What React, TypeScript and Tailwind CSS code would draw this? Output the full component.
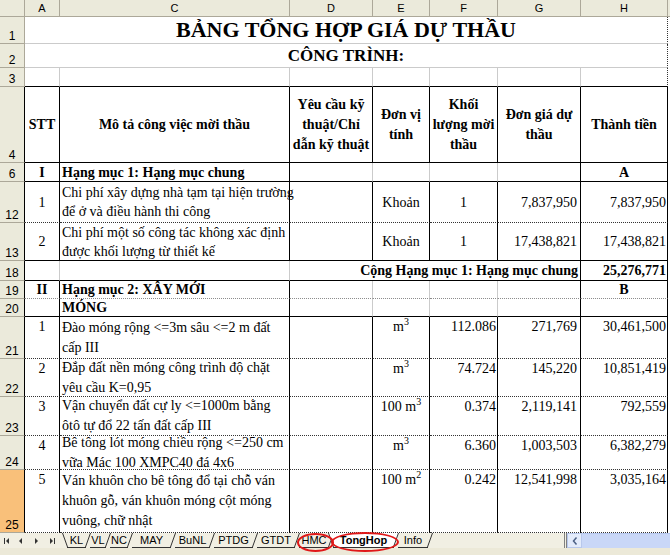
import React from "react";

// grid: row header | A | C | D | E | F | G | H | edge
const cols = "grid grid-cols-[25px_35px_230px_83px_57px_68px_83px_87px_2px] grid-rows-[minmax(0,1fr)]";

const R = {
    k: "[border-right:1px_solid_#000]",
    g: "[border-right:1px_solid_#cbcbcb]",
    p: "[border-right:1px_dotted_#333]",
    n: "",
};
const B = {
    k: "[border-bottom:1px_solid_#000]",
    g: "[border-bottom:1px_solid_#cbcbcb]",
    d: "[border-bottom:1px_dotted_#333]",
    dg: "[border-bottom:1px_dotted_#8c8c8c]",
};

type Cell = {
    t?: React.ReactNode;
    r: keyof typeof R;
    b: keyof typeof B;
    cls?: string;
};

type RowDef = {
    label: string;
    h: string;
    cells: Cell[];
    dark?: boolean;
    selected?: boolean;
};

const M3 = ({ pre, sup }: { pre?: string; sup: string }) => (
    <span>
        {pre}m<sup className="-top-[6px] text-[10px]">{sup}</sup>
    </span>
);

const lines = (arr: string[]) =>
    arr.map((l, i) => (
        <div key={i} className="whitespace-nowrap">
            {l}
        </div>
    ));

const center = "flex items-center justify-center";
const topC = "flex justify-center leading-[20px]";
const numT = "text-right leading-[20px] whitespace-nowrap";

const item = (
    no: string,
    desc: string[],
    unit: React.ReactNode,
    qty: string,
    price: string,
    total: string
): Cell[] => [
    { t: no, r: "k", b: "d", cls: topC },
    { t: lines(desc), r: "k", b: "d", cls: "flex flex-col justify-center pl-[2px] leading-[20px]" },
    { r: "k", b: "d" },
    { t: unit, r: "k", b: "d", cls: topC },
    { t: qty, r: "k", b: "d", cls: numT + " pr-[1px]" },
    { t: price, r: "k", b: "d", cls: numT + " pr-[3px]" },
    { t: total, r: "k", b: "d", cls: numT + " pr-[1px]" },
];

const rows: RowDef[] = [
    {
        label: "1",
        h: "h-[27px]",
        cells: [
            {
                t: "BẢNG TỔNG HỢP GIÁ DỰ THẦU",
                r: "p",
                b: "g",
                cls: "col-span-7 flex items-end justify-center pb-[1px] text-[22px] font-bold leading-[25px]",
            },
        ],
    },
    {
        label: "2",
        h: "h-[24px]",
        cells: [
            {
                t: "CÔNG TRÌNH:",
                r: "p",
                b: "g",
                cls: "col-span-7 flex items-center justify-center pt-[1px] text-[17px] font-bold",
            },
        ],
    },
    {
        label: "3",
        h: "h-[19px]",
        cells: [
            { r: "g", b: "k" },
            { r: "g", b: "k" },
            { r: "g", b: "k" },
            { r: "g", b: "k" },
            { r: "g", b: "k" },
            { r: "g", b: "k" },
            { r: "p", b: "k" },
        ],
    },
    {
        label: "4",
        h: "h-[76px]",
        dark: true,
        cells: [
            { t: "STT", r: "k", b: "k", cls: center + " font-bold" },
            { t: "Mô tả công việc mời thầu", r: "k", b: "k", cls: center + " font-bold" },
            {
                t: lines(["Yêu cầu kỹ", "thuật/Chỉ", "dẫn kỹ thuật"]),
                r: "k",
                b: "k",
                cls: "flex flex-col items-center justify-center font-bold leading-[20px]",
            },
            {
                t: lines(["Đơn vị", "tính"]),
                r: "k",
                b: "k",
                cls: "flex flex-col items-center justify-center font-bold leading-[20px]",
            },
            {
                t: lines(["Khối", "lượng mời", "thầu"]),
                r: "k",
                b: "k",
                cls: "flex flex-col items-center justify-center font-bold leading-[20px]",
            },
            {
                t: lines(["Đơn giá dự", "thầu"]),
                r: "k",
                b: "k",
                cls: "flex flex-col items-center justify-center font-bold leading-[20px]",
            },
            { t: "Thành tiền", r: "k", b: "k", cls: center + " font-bold" },
        ],
    },
    {
        label: "6",
        h: "h-[19px]",
        dark: true,
        cells: [
            { t: "I", r: "k", b: "k", cls: center + " font-bold" },
            { t: "Hạng mục 1: Hạng mục chung", r: "k", b: "k", cls: "flex items-center pl-[2px] font-bold" },
            { r: "g", b: "k" },
            { r: "g", b: "k" },
            { r: "g", b: "k" },
            { r: "k", b: "k" },
            { t: "A", r: "k", b: "k", cls: center + " font-bold" },
        ],
    },
    {
        label: "12",
        h: "h-[41px]",
        dark: true,
        cells: [
            { t: "1", r: "k", b: "d", cls: center },
            {
                t: lines(["Chi phí xây dựng nhà tạm tại hiện trường", "để ở và điều hành thi công"]),
                r: "k",
                b: "d",
                cls: "flex flex-col justify-center pl-[2px] leading-[19px]",
            },
            { r: "k", b: "d" },
            { t: "Khoản", r: "k", b: "d", cls: center },
            { t: "1", r: "k", b: "d", cls: center },
            { t: "7,837,950", r: "k", b: "d", cls: "flex items-center justify-end pr-[3px]" },
            { t: "7,837,950", r: "k", b: "d", cls: "flex items-center justify-end pr-[1px]" },
        ],
    },
    {
        label: "13",
        h: "h-[38px]",
        dark: true,
        cells: [
            { t: "2", r: "k", b: "k", cls: center },
            {
                t: lines(["Chi phí một số công tác không xác định", "được khối lượng từ thiết kế"]),
                r: "k",
                b: "k",
                cls: "flex flex-col justify-center pl-[2px] leading-[19px]",
            },
            { r: "k", b: "k" },
            { t: "Khoản", r: "k", b: "k", cls: center },
            { t: "1", r: "k", b: "k", cls: center },
            { t: "17,438,821", r: "k", b: "k", cls: "flex items-center justify-end pr-[3px]" },
            { t: "17,438,821", r: "k", b: "k", cls: "flex items-center justify-end pr-[1px]" },
        ],
    },
    {
        label: "18",
        h: "h-[20px]",
        dark: true,
        cells: [
            { r: "g", b: "k" },
            { r: "g", b: "k" },
            {
                t: "Cộng Hạng mục 1: Hạng mục chung",
                r: "k",
                b: "k",
                cls: "col-span-4 flex items-center justify-end whitespace-nowrap pr-[2px] font-bold",
            },
            { t: "25,276,771", r: "k", b: "k", cls: "flex items-center justify-end pr-[1px] font-bold" },
        ],
    },
    {
        label: "19",
        h: "h-[18px]",
        dark: true,
        cells: [
            { t: "II", r: "k", b: "dg", cls: center + " font-bold" },
            { t: "Hạng mục 2: XÂY MỚI", r: "k", b: "dg", cls: "flex items-center pl-[2px] font-bold" },
            { r: "g", b: "dg" },
            { r: "g", b: "dg" },
            { r: "g", b: "dg" },
            { r: "k", b: "dg" },
            { t: "B", r: "k", b: "dg", cls: center + " font-bold" },
        ],
    },
    {
        label: "20",
        h: "h-[18px]",
        dark: true,
        cells: [
            { r: "k", b: "k" },
            { t: "MÓNG", r: "k", b: "k", cls: "flex items-center pl-[2px] font-bold" },
            { r: "g", b: "k" },
            { r: "g", b: "k" },
            { r: "g", b: "k" },
            { r: "k", b: "k" },
            { r: "k", b: "k" },
        ],
    },
    {
        label: "21",
        h: "h-[42px]",
        dark: true,
        cells: item("1", ["Đào móng rộng <=3m sâu <=2 m đất", "cấp III"], <M3 sup="3" />, "112.086", "271,769", "30,461,500"),
    },
    {
        label: "22",
        h: "h-[38px]",
        dark: true,
        cells: item("2", ["Đắp đất nền móng công trình độ chặt", "yêu cầu K=0,95"], <M3 sup="3" />, "74.724", "145,220", "10,851,419"),
    },
    {
        label: "23",
        h: "h-[39px]",
        dark: true,
        cells: item("3", ["Vận chuyển đất cự ly <=1000m bằng", "ôtô tự đổ 22 tấn đất cấp III"], <M3 pre="100 " sup="3" />, "0.374", "2,119,141", "792,559"),
    },
    {
        label: "24",
        h: "h-[34px]",
        dark: true,
        cells: item("4", ["Bê tông lót móng chiều rộng <=250 cm", "vữa Mác 100 XMPC40 đá 4x6"], <M3 sup="3" />, "6.360", "1,003,503", "6,382,279"),
    },
    {
        label: "25",
        h: "h-[63px]",
        dark: true,
        selected: true,
        cells: item(
            "5",
            ["Ván khuôn cho bê tông đổ tại chỗ ván", "khuôn gỗ, ván khuôn móng cột móng", "vuông, chữ nhật"],
            <M3 pre="100 " sup="2" />,
            "0.242",
            "12,541,998",
            "3,035,164"
        ),
    },
];

const headCell =
    "flex items-center justify-center bg-[#ebeadb] [border-right:1px_solid_#aca899] [border-bottom:1px_solid_#aca899] text-[11px] text-black";

const tabs = [
    { label: "KL", w: "w-[23px]" },
    { label: "VL", w: "w-[20px]" },
    { label: "NC", w: "w-[22px]" },
    { label: "MAY", w: "w-[43px]" },
    { label: "BuNL", w: "w-[39px]" },
    { label: "PTDG", w: "w-[43px]" },
    { label: "GTDT", w: "w-[42px]" },
    { label: "HMC", w: "w-[34px]" },
    { label: "TongHop", w: "w-[65px]", active: true },
    { label: "Info", w: "w-[34px]" },
];

const SlashBack = ({ cls }: { cls: string }) => (
    <svg className={`absolute top-0 ${cls}`} width="6" height="15">
        <line x1="0.5" y1="0" x2="5.5" y2="14" stroke="#333" strokeWidth="1" />
    </svg>
);
const SlashFwd = ({ cls }: { cls: string }) => (
    <svg className={`absolute top-0 ${cls}`} width="6" height="15">
        <line x1="5.5" y1="0" x2="0.5" y2="14" stroke="#333" strokeWidth="1" />
    </svg>
);

export default function App() {
    return (
        <div className="h-[555px] w-[670px] overflow-hidden bg-white text-black [font-family:'Liberation_Serif','Times_New_Roman',serif] text-[14px]">
            {/* column headers */}
            <div className={`${cols} h-[17px] [font-family:'Liberation_Sans',Arial,sans-serif]`}>
                <div className={headCell} />
                {["A", "C", "D", "E", "F", "G", "H"].map((c) => (
                    <div key={c} className={headCell}>
                        {c}
                    </div>
                ))}
                <div className="bg-[#ebeadb] [border-bottom:1px_solid_#aca899]" />
            </div>

            {/* sheet rows */}
            {rows.map((row) => (
                <div key={row.label} className={`${cols} ${row.h}`}>
                    <div
                        className={`flex items-end justify-center pb-[1px] text-[12px] leading-none [font-family:'Liberation_Sans',Arial,sans-serif] [border-bottom:1px_solid_#aca899] ${
                            row.dark ? "[border-right:1px_solid_#000]" : "[border-right:1px_solid_#aca899]"
                        } ${row.selected ? "bg-[#f9c07a]" : "bg-[#ebeadb]"}`}
                    >
                        {row.label}
                    </div>
                    {row.cells.map((c, i) => (
                        <div key={i} className={`min-h-0 overflow-visible ${R[c.r]} ${B[c.b]} ${c.cls ?? ""}`}>
                            {c.t}
                        </div>
                    ))}
                    <div />
                </div>
            ))}

            {/* sheet tabs */}
            <div className="relative [font-family:'Liberation_Sans',Arial,sans-serif] text-[11px]">
                <div className="flex h-[15px] bg-[#f1efe3]">
                    <div className="flex w-[60px] items-center">
                        <svg width="60" height="15">
                            <rect x="4" y="5" width="1" height="6" fill="#333" />
                            <polygon points="9,5 9,11 6,8" fill="#333" />
                            <polygon points="22,5 22,11 19,8" fill="#333" />
                            <polygon points="35,5 35,11 38,8" fill="#333" />
                            <polygon points="50,5 50,11 53,8" fill="#333" />
                            <rect x="54" y="5" width="1" height="6" fill="#333" />
                        </svg>
                    </div>
                    <div className="flex flex-1 pl-[5px]">
                        {tabs.map((t, i) => (
                            <div
                                key={t.label}
                                className={`relative flex h-[15px] items-center justify-center ${t.w} ${
                                    t.active ? "z-20 font-bold" : "z-10"
                                }`}
                            >
                                {t.active && (
                                    <div className="absolute inset-y-0 -left-[3px] -right-[3px] bg-white [clip-path:polygon(0_0,100%_0,calc(100%-5px)_100%,5px_100%)]" />
                                )}
                                {(i === 0 || t.active) && <SlashBack cls="-left-[3px]" />}
                                <SlashFwd cls="-right-[3px]" />
                                <div className="absolute bottom-0 left-[2px] right-[2px] h-px bg-[#333]" />
                                <span className="relative leading-none">{t.label}</span>
                            </div>
                        ))}
                    </div>
                    <div className="w-[3px] [border-left:1px_solid_#808080] [border-right:1px_solid_#808080] bg-[#f1efe3]" />
                    <div className="flex w-[15px] items-center justify-center bg-[#e3ebfb] [border:1px_solid_#b8c8ec]">
                        <svg width="6" height="8">
                            <polyline points="4.5,0.5 1.5,4 4.5,7.5" fill="none" stroke="#4d6185" strokeWidth="1.5" />
                        </svg>
                    </div>
                    <div className="w-[88px] bg-[#c9d7f7] [border-top:1px_solid_#b5c6ee]" />
                </div>
                <div className="h-[7px] bg-[#ece9d8]" />

                {/* annotations */}
                <div className="absolute left-[297px] top-0 z-30 h-[19px] w-[37px] rounded-[50%] border-2 border-[#e01818]" />
                <div className="absolute left-[331px] top-[-1px] z-30 h-[20px] w-[68px] rounded-[50%] border-2 border-[#e01818]" />
            </div>
        </div>
    );
}
